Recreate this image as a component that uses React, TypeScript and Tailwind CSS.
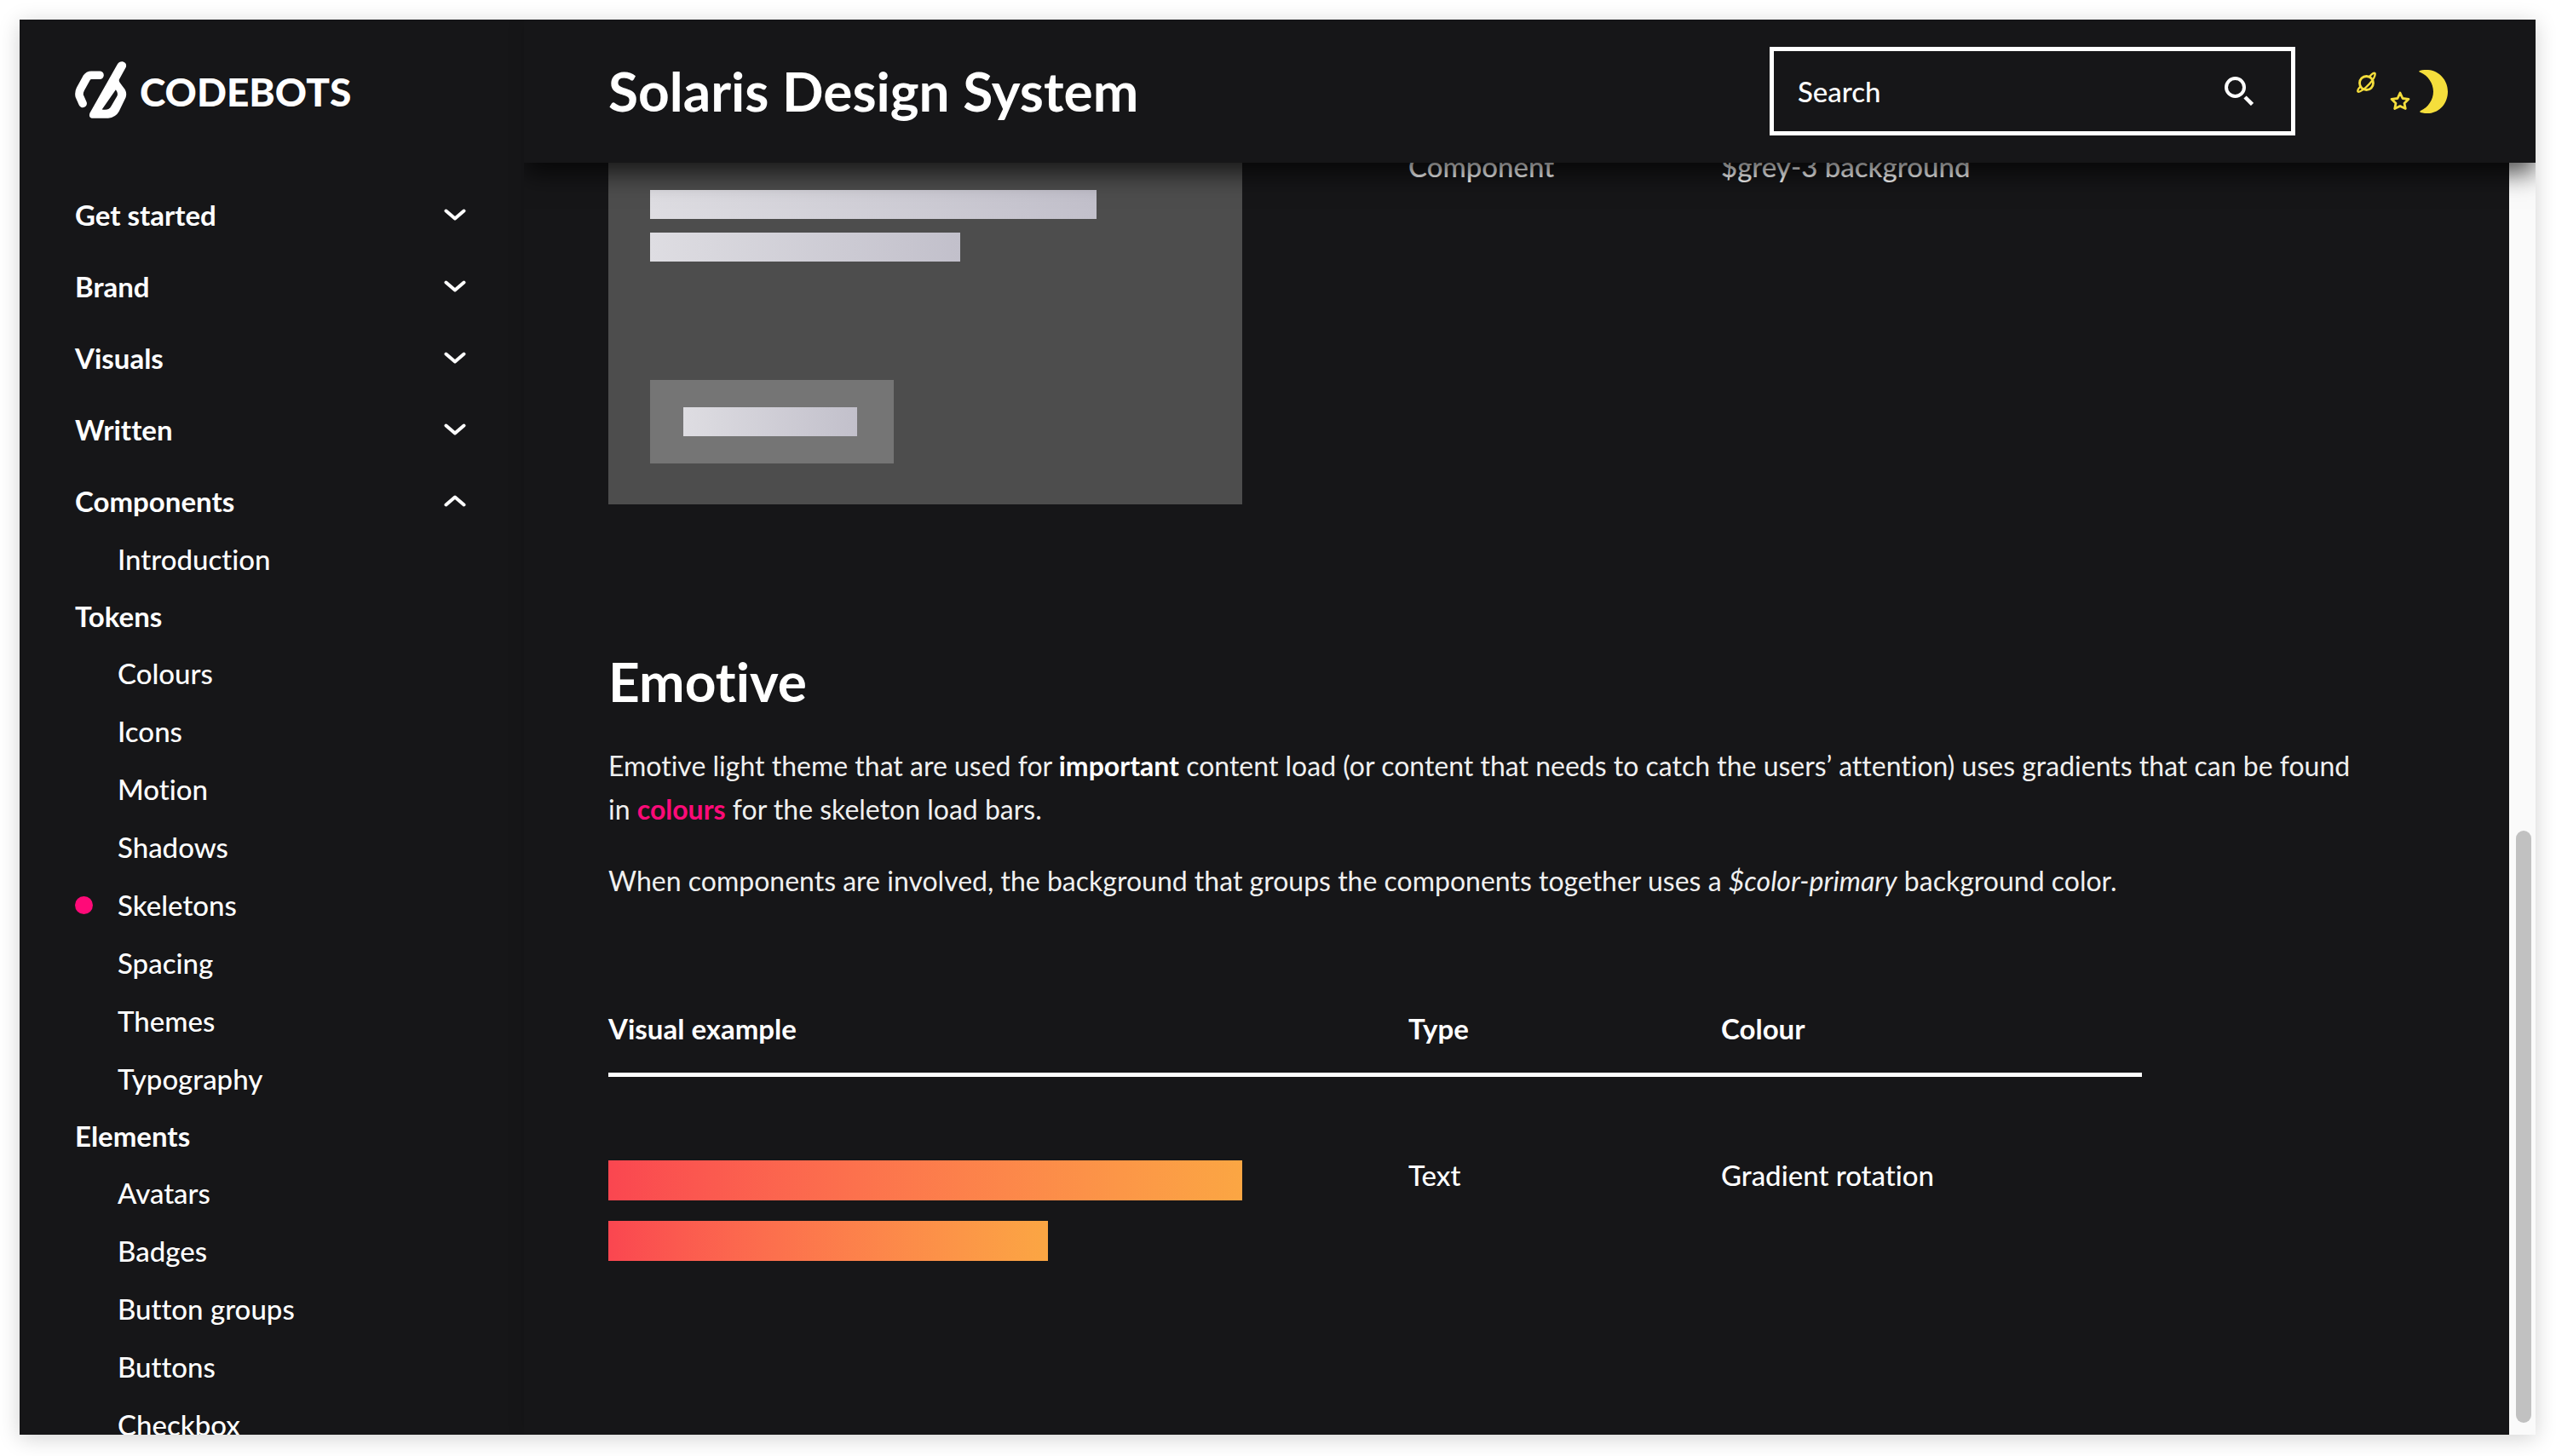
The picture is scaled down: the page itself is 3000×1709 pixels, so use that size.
import { ReactNode } from "react";

const groups = ["Get started", "Brand", "Visuals", "Written"];

const sections = [
  {
    title: "Tokens",
    items: ["Colours", "Icons", "Motion", "Shadows", "Skeletons", "Spacing", "Themes", "Typography"],
  },
  {
    title: "Elements",
    items: ["Avatars", "Badges", "Button groups", "Buttons", "Checkbox"],
  },
];

function Chevron({ up = false }: { up?: boolean }) {
  return (
    <svg width="26" height="14" viewBox="0 0 26 14" fill="none" stroke="currentColor" strokeWidth="4" strokeLinecap="round" strokeLinejoin="round" aria-hidden="true">
      <path d={up ? "M2.5 11.5 13 2.5l10.500 9" : "M2.5 2.5 13 11.500l10.500-9"} />
    </svg>
  );
}

function Logo() {
  return (
    <a href="#home" className="flex items-center gap-[15px]">
      <svg width="61" height="67" viewBox="85 66 183 202" aria-hidden="true">
        <path d="M172 115H142Q132 115 126 124L104 164Q97 178 101 190L112 215" fill="none" stroke="#fff" strokeWidth="29" strokeLinecap="round" strokeLinejoin="round" />
        <path
          fill="#fff"
          fillRule="evenodd"
          d="M235 76Q241 66 253 67Q269 71 265 86L241 130Q239 136 244 142L262 166Q269 180 264 194L240 244Q228 265 202 267H144Q132 264 137 249ZM229 166L180 236Q206 240 212 226L234 188Q238 178 229 166Z"
        />
      </svg>
      <span className="pt-1 text-[46px] leading-[60px] font-black">CODEBOTS</span>
    </a>
  );
}

function NavItem({ label, active = false }: { label: string; active?: boolean }) {
  return (
    <li>
      <a href={"#" + label.toLowerCase().replace(" ", "-")} className="relative flex h-[68px] items-center pl-[50px] font-medium" aria-current={active ? "page" : undefined}>
        {active && <span className="absolute left-0 size-[21px] rounded-full bg-[#ff0a78]" />}
        {label}
      </a>
    </li>
  );
}

function Sidebar() {
  return (
    <aside className="flex w-[592px] shrink-0 flex-col overflow-hidden pt-[49px] pr-[68px] pl-[65px]">
      <Logo />
      <nav className="mt-[71px]" aria-label="Main">
        {groups.map((g) => (
          <button key={g} type="button" aria-expanded="false" className="flex h-[84px] w-full items-center justify-between font-bold">
            {g}
            <Chevron />
          </button>
        ))}
        <button type="button" aria-expanded="true" className="flex h-[84px] w-full items-center justify-between font-bold">
          Components
          <Chevron up />
        </button>
        <ul className="-mt-2">
          <NavItem label="Introduction" />
        </ul>
        {sections.map((s) => (
          <section key={s.title}>
            <h3 className="flex h-[66px] items-center font-bold">{s.title}</h3>
            <ul>
              {s.items.map((i) => (
                <NavItem key={i} label={i} active={i === "Skeletons"} />
              ))}
            </ul>
          </section>
        ))}
      </nav>
    </aside>
  );
}

function ThemeIcon() {
  return (
    <svg width="107" height="51" viewBox="0 0 107 51" fill="none" stroke="#f5de3c" strokeLinejoin="round" strokeLinecap="round" aria-hidden="true">
      <circle cx="11.500" cy="15.500" r="8" strokeWidth="2.800" />
      <path d="M4.500 19.500C1.500 22.500 1 24.500 1.500 25.500C3 27 10 22 15 16.500C20 11 22.500 7.500 21.500 4C20.500 3 18 4.500 15.500 7.500" strokeWidth="2.400" />
      <path d="M51 27L54 33.500L61 34.300L56 39.200L57.300 45.500L51 42.500L44.700 45.500L46 39.200L41 34.300L48 33.500Z" strokeWidth="2.800" />
      <path d="M74 1C92-4 107 9 107 25.500C107 43 92 55 75 50C74 49.500 74 48.500 75 48C84 44 90 35 90 25.500C90 16 84 7 75 3C73 2.500 73 1.500 74 1Z" fill="#f5de3c" stroke="none" />
    </svg>
  );
}

function Header() {
  return (
    <header className="relative z-10 flex h-[168px] shrink-0 items-center bg-[#161618] pr-[103px] pl-[99px] shadow-[0_12px_28px_rgba(0,0,0,0.7)]">
      <h1 className="text-[64px] leading-[80px] font-bold">Solaris Design System</h1>
      <form role="search" className="ml-auto flex h-[104px] w-[617px] items-center border-[5px] border-white pr-11 pl-7">
        <label htmlFor="search" className="sr-only">Search</label>
        <input id="search" type="text" placeholder="Search" className="min-w-0 flex-1 bg-transparent font-medium outline-none placeholder:text-white placeholder:opacity-100" />
        <button type="submit" aria-label="Submit search">
          <svg width="34" height="34" viewBox="0 0 34 34" fill="none" stroke="currentColor" strokeWidth="4" aria-hidden="true">
            <circle cx="12.500" cy="12.500" r="10.500" />
            <path d="M24 24l8.500 8.500" strokeWidth="4.500" strokeLinecap="butt" />
          </svg>
        </button>
      </form>
      <button type="button" aria-label="Toggle dark theme" className="ml-[72px]">
        <ThemeIcon />
      </button>
    </header>
  );
}

function Columns() {
  return (
    <colgroup>
      <col className="w-[939px]" />
      <col className="w-[367px]" />
      <col />
    </colgroup>
  );
}

function Row({ example, type, colour }: { example: ReactNode; type: string; colour: string }) {
  return (
    <tr className="align-top">
      <td>{example}</td>
      <td>{type}</td>
      <td>{colour}</td>
    </tr>
  );
}

const greyBar = "h-[34px] bg-linear-to-r from-[#dedde2] to-[#c2c0cb]";
const warmBar = "h-[47px] bg-linear-to-r from-[#fa4650] to-[#fba643]";

function ComponentSkeleton() {
  return (
    <div className="mt-2 w-[744px] bg-[#4d4d4d] px-[49px] pt-[45px] pb-12">
      <div className={greyBar + " w-[524px]"} />
      <div className={greyBar + " mt-4 w-[364px]"} />
      <div className="mt-[139px] w-[286px] bg-[#757575] px-[39px] py-8">
        <div className={greyBar + " w-[204px]"} />
      </div>
    </div>
  );
}

function TextSkeleton() {
  return (
    <div className="mt-2 w-[744px]">
      <div className={warmBar} />
      <div className={warmBar + " mt-6 w-[516px]"} />
    </div>
  );
}

function Content() {
  return (
    <main className="min-w-0 flex-1 overflow-hidden pr-[150px] pl-[99px]">
      <table className="-mt-[21px] w-full max-w-[1800px] table-fixed text-left font-medium">
        <Columns />
        <tbody>
          <Row example={<ComponentSkeleton />} type="Component" colour="$grey-3 background" />
        </tbody>
      </table>
      <h2 className="mt-[168px] text-[64px] leading-[80px] font-bold">Emotive</h2>
      <div className="mt-[33px] space-y-[33px] pr-3 text-[32px] leading-[51px] text-[#f0f0f0]">
        <p>
          Emotive light theme that are used for <strong className="text-white">important</strong> content load (or content that needs to catch the users’ attention) uses gradients that can be found in{" "}
          <a href="#colours" className="font-bold text-[#ff0a78]">colours</a> for the skeleton load bars.
        </p>
        <p>
          When components are involved, the background that groups the components together uses a <em>$color-primary</em> background color.
        </p>
      </div>
      <table className="mt-[123px] w-full max-w-[1800px] table-fixed text-left font-medium">
        <Columns />
        <thead>
          <tr className="border-b-[5px] border-white">
            <th scope="col" className="pb-[26px] font-bold">Visual example</th>
            <th scope="col" className="pb-[26px] font-bold">Type</th>
            <th scope="col" className="pb-[26px] font-bold">Colour</th>
          </tr>
        </thead>
        <tbody className="before:block before:h-[90px]">
          <Row example={<TextSkeleton />} type="Text" colour="Gradient rotation" />
        </tbody>
      </table>
    </main>
  );
}

export default function App() {
  return (
    <div className="h-screen bg-white pt-[23px] pr-6 pb-[25px] pl-[23px] font-['Lato',sans-serif] text-[33px] leading-[51px] text-white [font-variant-ligatures:none]">
      <div className="flex h-full overflow-hidden bg-[#161618] shadow-[0_4px_24px_rgba(0,0,0,0.18)]">
        <Sidebar />
        <div className="flex min-w-0 flex-1 flex-col overflow-hidden shadow-[0_0_20px_rgba(0,0,0,0.12)]">
          <Header />
          <div className="flex min-h-0 flex-1">
            <Content />
            <div className="flex w-[31px] shrink-0 flex-col justify-end bg-[#fafafa] pr-[5px] pb-[14px] pl-2" aria-hidden="true">
              <div className="h-[47%] rounded-full bg-[#c1c1c1]" />
            </div>
          </div>
        </div>
      </div>
    </div>
  );
}
